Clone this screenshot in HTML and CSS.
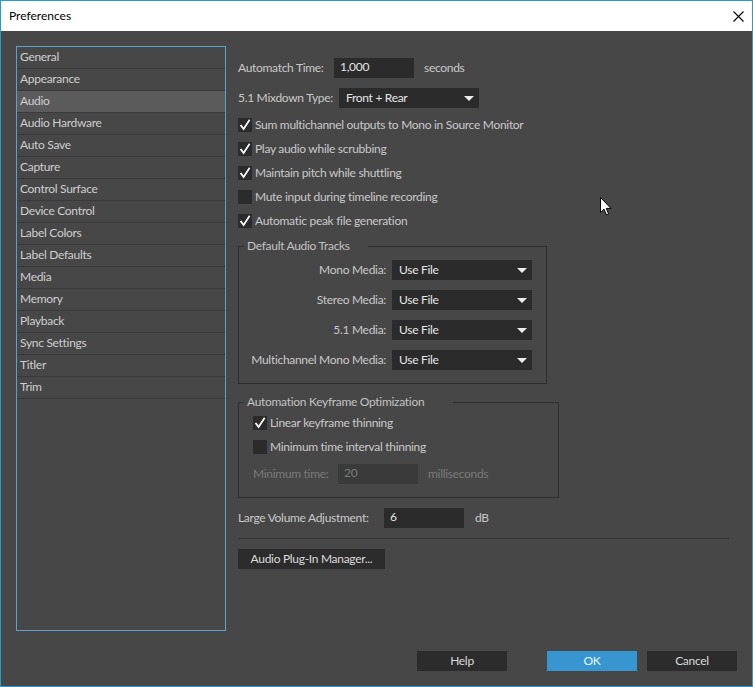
FILE: index.html
```html
<!DOCTYPE html>
<html>
<head>
<meta charset="utf-8">
<title>Preferences</title>
<link rel="stylesheet" href="styles.css">
</head>
<body>
<div class="window">
  <div class="titlebar">
    <span class="title">Preferences</span>
    <svg class="close" width="11" height="11" viewBox="0 0 11 11"><path d="M0.5 0.5 L10.5 10.5 M10.5 0.5 L0.5 10.5" stroke="#000" stroke-width="1.1" fill="none"/></svg>
  </div>
  <div class="body">
    <div class="top">
      <ul class="nav">
        <li>General</li>
        <li>Appearance</li>
        <li class="selected">Audio</li>
        <li>Audio Hardware</li>
        <li>Auto Save</li>
        <li>Capture</li>
        <li>Control Surface</li>
        <li>Device Control</li>
        <li>Label Colors</li>
        <li>Label Defaults</li>
        <li>Media</li>
        <li>Memory</li>
        <li>Playback</li>
        <li>Sync Settings</li>
        <li>Titler</li>
        <li>Trim</li>
      </ul>
      <div class="pane">
        <div class="row first">
          <span class="label w-auto">Automatch Time:</span>
          <span class="field">1,000</span>
          <span class="unit">seconds</span>
        </div>
        <div class="row">
          <span class="label w-mix">5.1 Mixdown Type:</span>
          <span class="select">Front + Rear<i class="arrow"></i></span>
        </div>
        <div class="checks">
          <div class="check"><span class="box on"><svg viewBox="0 0 14 14"><path d="M3 7.6 L5.6 11 L11.2 2.4" /></svg></span><span>Sum multichannel outputs to Mono in Source Monitor</span></div>
          <div class="check"><span class="box on"><svg viewBox="0 0 14 14"><path d="M3 7.6 L5.6 11 L11.2 2.4" /></svg></span><span>Play audio while scrubbing</span></div>
          <div class="check"><span class="box on"><svg viewBox="0 0 14 14"><path d="M3 7.6 L5.6 11 L11.2 2.4" /></svg></span><span>Maintain pitch while shuttling</span></div>
          <div class="check"><span class="box"></span><span>Mute input during timeline recording</span></div>
          <div class="check"><span class="box on"><svg viewBox="0 0 14 14"><path d="M3 7.6 L5.6 11 L11.2 2.4" /></svg></span><span>Automatic peak file generation</span></div>
        </div>
        <div class="group tracks">
          <div class="group-title t1">Default Audio Tracks</div>
          <div class="track-grid">
            <span class="tlabel">Mono Media:</span><span class="select">Use File<i class="arrow"></i></span>
            <span class="tlabel">Stereo Media:</span><span class="select">Use File<i class="arrow"></i></span>
            <span class="tlabel">5.1 Media:</span><span class="select">Use File<i class="arrow"></i></span>
            <span class="tlabel">Multichannel Mono Media:</span><span class="select">Use File<i class="arrow"></i></span>
          </div>
        </div>
        <div class="group keyframe">
          <div class="group-title t2">Automation Keyframe Optimization</div>
          <div class="check"><span class="box on"><svg viewBox="0 0 14 14"><path d="M3 7.6 L5.6 11 L11.2 2.4" /></svg></span><span>Linear keyframe thinning</span></div>
          <div class="check"><span class="box"></span><span>Minimum time interval thinning</span></div>
          <div class="row disabled">
            <span class="label w-min">Minimum time:</span>
            <span class="field">20</span>
            <span class="unit">milliseconds</span>
          </div>
        </div>
        <div class="row volume">
          <span class="label w-vol">Large Volume Adjustment:</span>
          <span class="field">6</span>
          <span class="unit">dB</span>
        </div>
        <div class="separator"></div>
        <div class="btn plugin">Audio Plug-In Manager...</div>
      </div>
    </div>
    <div class="footer">
      <div class="btn dialog help">Help</div>
      <div class="btn dialog ok">OK</div>
      <div class="btn dialog">Cancel</div>
    </div>
    <svg class="cursor" width="13" height="20" viewBox="0 0 13 20"><path d="M0.5 0.5 L0.5 15.5 L4 12.2 L6.4 17.8 L8.6 16.8 L6.3 11.4 L11 11.4 Z" fill="#fff" stroke="#000" stroke-width="1"/></svg>
  </div>
</div>
</body>
</html>
```

FILE: styles.css
```css
* { box-sizing: border-box; }
html, body { margin: 0; padding: 0; }
body {
  width: 753px;
  height: 687px;
  font-family: "Lato", "Open Sans", sans-serif;
  font-size: 12px;
  letter-spacing: -0.3px;
  color: #c9c9c9;
  background: #474747;
  overflow: hidden;
}
.window {
  width: 753px;
  height: 687px;
  border: 1px solid #2a9bcf;
  display: flex;
  flex-direction: column;
}
.titlebar {
  height: 30px;
  background: #ffffff;
  display: flex;
  align-items: center;
  padding: 0 8px 0 8px;
  flex: none;
}
.title {
  color: #000;
  font-size: 12px;
  letter-spacing: 0;
  flex: 1;
  padding-bottom: 1px;
}
.close { display: block; margin-right: 0; margin-top: 1px; }
.body {
  flex: 1;
  background: #474747;
  padding: 15px 15px 0 15px;
  position: relative;
  display: flex;
  flex-direction: column;
}
.top {
  height: 585px;
  display: flex;
  flex: none;
}
.nav {
  list-style: none;
  margin: 0;
  padding: 0;
  width: 210px;
  height: 585px;
  border: 1px solid #5ea2cb;
  flex: none;
}
.nav li {
  height: 22px;
  line-height: 20px;
  border-bottom: 1px solid #3a3a3a;
  padding-left: 3px;
  color: #cecece;
}
.nav li.selected { background: #5b5b5b; }
.pane {
  flex: 1;
  margin-left: 12px;
  display: flex;
  flex-direction: column;
}
.row {
  display: flex;
  align-items: center;
  height: 20px;
  margin-top: 10px;
  line-height: 18px;
}
.row .label, .row .unit { padding-bottom: 1px; }
.row.first { margin-top: 12px; }
.label { flex: none; }
.w-auto { width: 96px; }
.w-mix { width: 101px; }
.w-min { width: 85px; }
.w-vol { width: 146px; }
.field {
  width: 80px;
  height: 20px;
  background: #2b2b2b;
  color: #e4e4e4;
  padding-left: 6px;
  line-height: 18px;
}
.unit { margin-left: 10px; }
.select {
  width: 140px;
  height: 20px;
  background: #2b2b2b;
  color: #e6e6e6;
  padding-left: 7px;
  padding-bottom: 1px;
  display: flex;
  align-items: center;
  flex: none;
}
.arrow {
  margin-left: auto;
  margin-right: 5px;
  margin-top: 1px;
  width: 0;
  height: 0;
  border-left: 5px solid transparent;
  border-right: 5px solid transparent;
  border-top: 5px solid #ececec;
}
.checks { margin-top: 5px; }
.check {
  display: flex;
  align-items: center;
  height: 24px;
}
.check > span:last-child { padding-bottom: 1px; }
.box {
  width: 14px;
  height: 14px;
  background: #2b2b2b;
  margin-right: 3px;
  flex: none;
  display: flex;
}
.box svg { width: 14px; height: 14px; }
.box path { fill: none; stroke: #ffffff; stroke-width: 1.7; stroke-linecap: square; }
.group {
  border: 1px solid #2f2f2f;
}
.group-title {
  width: fit-content;
  margin: -9px 0 0 5px;
  line-height: 16px;
  background: #474747;
  color: #c2c2c2;
  padding-left: 3px;
}
.t1 { padding-right: 18px; }
.t2 { padding-right: 29px; }
.tracks {
  width: 309px;
  margin-top: 13px;
  padding: 0 14px 13px 0;
}
.track-grid {
  margin-top: 6px;
  display: grid;
  grid-template-columns: auto 140px;
  justify-content: end;
  column-gap: 6px;
  row-gap: 10px;
  align-items: center;
}
.tlabel { text-align: right; padding-bottom: 1px; }
.keyframe {
  width: 321px;
  margin-top: 18px;
  padding: 0 0 13px 14px;
}
.keyframe .group-title { margin-left: -9px; margin-bottom: 1px; }
.keyframe .row { margin-top: 5px; }
.disabled .label, .disabled .unit { color: #7a7a7a; }
.disabled .field { color: #7a7a7a; background: #3a3a3a; }
.volume { margin-top: 10px; }
.volume .unit { margin-left: 11px; }
.separator {
  height: 1px;
  background: #333333;
  margin: 10px 8px 0 0;
}
.btn {
  height: 20px;
  line-height: 19px;
  background: #2c2c2c;
  color: #dadada;
  text-align: center;
}
.plugin {
  width: 147px;
  margin-top: 10px;
}
.footer {
  margin-top: 20px;
  display: flex;
  justify-content: flex-end;
  gap: 10px;
}
.dialog { width: 90px; }
.help { margin-right: 30px; }
.ok { background: #3796cf; color: #eaf4fb; }
.cursor {
  position: absolute;
  left: 599px;
  top: 166px;
}
```
